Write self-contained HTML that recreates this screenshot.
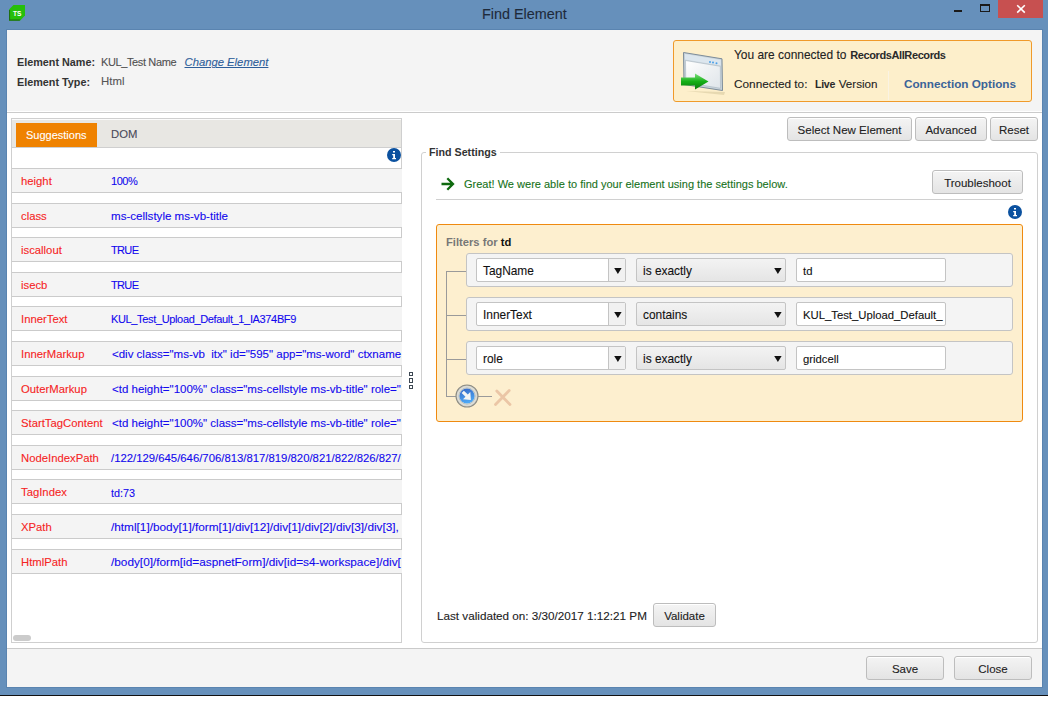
<!DOCTYPE html><html><head><meta charset="utf-8"><style>
html,body{margin:0;padding:0;}
body{width:1049px;height:701px;overflow:hidden;position:relative;background:#fff;font-family:"Liberation Sans",sans-serif;}
.t{position:absolute;white-space:nowrap;line-height:1;-webkit-text-stroke:0.1px currentColor;}
.btn{position:absolute;box-sizing:border-box;border:1px solid #bdbdbd;border-radius:3px;background:linear-gradient(#f4f4f4,#e4e4e4);box-shadow:inset 0 1px 0 #fff;}
</style></head><body>
<div style="position:absolute;left:0px;top:0px;width:1048px;height:695px;box-sizing:border-box;background:#6690bb;"></div>
<div style="position:absolute;left:1047px;top:0px;width:1px;height:695px;box-sizing:border-box;background:#6690bb;"></div>
<div style="position:absolute;left:0px;top:695px;width:1048px;height:1px;box-sizing:border-box;background:#111;"></div>
<svg style="position:absolute;left:9px;top:5px" width="17" height="17" viewBox="0 0 17 17"><path d="M0 4.5 L4.5 0 L16 0 L16 10.5 L11.2 15.6 L0 15.6 Z" fill="#26bf0a"/><path d="M0 5 H1.1 V14.5 H11.5 L10.6 15.8 H0 Z" fill="#1f6f10"/><text x="8.2" y="10.9" font-family="Liberation Sans" font-weight="bold" font-size="6.6" fill="#fff" text-anchor="middle">TS</text></svg>
<div class="t" style="left:482px;top:6.81px;font-size:14.4px;color:#1e2a3a;font-weight:normal;font-style:normal;">Find Element</div>
<div style="position:absolute;left:954px;top:10px;width:8px;height:2px;box-sizing:border-box;background:#1a1a1a;"></div>
<div style="position:absolute;left:980px;top:4px;width:10px;height:8px;box-sizing:border-box;border:1px solid #1a1a1a;border-top-width:2px;"></div>
<div style="position:absolute;left:998px;top:0px;width:45px;height:18px;box-sizing:border-box;background:#c75050;"></div>
<svg style="position:absolute;left:1016px;top:4px" width="10" height="10" viewBox="0 0 10 10"><path d="M1.2 1.2 L8.8 8.6 M8.8 1.2 L1.2 8.6" stroke="#fff" stroke-width="1.6"/></svg>
<div style="position:absolute;left:6px;top:29px;width:1037px;height:659px;box-sizing:border-box;background:#5a84b0;"></div>
<div style="position:absolute;left:7px;top:30px;width:1035px;height:657px;box-sizing:border-box;background:#f4f4f4;"></div>
<div style="position:absolute;left:7px;top:111px;width:1035px;height:1px;box-sizing:border-box;background:#fff;"></div>
<div style="position:absolute;left:7px;top:112px;width:1035px;height:1px;box-sizing:border-box;background:#cbcbcb;"></div>
<div style="position:absolute;left:7px;top:113px;width:1035px;height:535px;box-sizing:border-box;background:#fff;"></div>
<div style="position:absolute;left:7px;top:648px;width:1035px;height:1px;box-sizing:border-box;background:#cacaca;"></div>
<div class="t" style="left:17px;top:56.86px;font-size:10.8px;color:#333;font-weight:bold;font-style:normal;-webkit-text-stroke:0;">Element Name:</div>
<div class="t" style="left:101px;top:56.99px;font-size:11px;color:#505050;font-weight:normal;font-style:normal;letter-spacing:-0.38px;">KUL_Test Name</div>
<div class="t" style="left:184.5px;top:57.45px;font-size:11.28px;color:#2e5e9a;font-weight:normal;font-style:italic;text-decoration:underline;">Change Element</div>
<div class="t" style="left:17px;top:76.86px;font-size:10.8px;color:#333;font-weight:bold;font-style:normal;-webkit-text-stroke:0;">Element Type:</div>
<div class="t" style="left:101px;top:76.35px;font-size:11.4px;color:#555;font-weight:normal;font-style:normal;">Html</div>
<div style="position:absolute;left:673px;top:40px;width:359px;height:62px;box-sizing:border-box;background:#fdefcb;border:1px solid #f09a2a;border-radius:3px;"></div>
<div style="position:absolute;left:888px;top:71px;width:1px;height:29px;box-sizing:border-box;background:#faf3e3;"></div>
<svg style="position:absolute;left:676px;top:46px" width="56" height="50" viewBox="0 0 56 50"><defs><linearGradient id="wg" x1="0" y1="0" x2="1" y2="1"><stop offset="0" stop-color="#ffffff"/><stop offset="0.5" stop-color="#eef1f3"/><stop offset="1" stop-color="#dfe5ea"/></linearGradient><linearGradient id="ag" x1="0" y1="0" x2="0" y2="1"><stop offset="0" stop-color="#7fe07f"/><stop offset="0.5" stop-color="#16b016"/><stop offset="1" stop-color="#0a7a0a"/></linearGradient></defs><path d="M10 45 L48 49 L49 46 Z" fill="#d9c9a0" opacity="0.6"/><path d="M7.5 6.5 L46 12.8 L46.5 44.5 L8 38.5 Z" fill="#c9d4dc" stroke="#7d8c99" stroke-width="1" stroke-linejoin="round"/><path d="M9.5 14.5 L44.3 20.3 L44.5 42.3 L9.8 36.5 Z" fill="url(#wg)" stroke="#a8b6c0" stroke-width="0.6"/><path d="M9 8 L44.8 14 L44.8 19.5 L9 13.5 Z" fill="#dce6ee"/><circle cx="34" cy="16" r="1" fill="#4aa0e8"/><circle cx="37" cy="16.6" r="1" fill="#4aa0e8"/><circle cx="40.5" cy="17.2" r="1" fill="#4aa0e8"/><path d="M5 31.5 H19 V27.5 L32.5 35.5 L19 43.5 V39.5 H5 Z" fill="url(#ag)"/></svg>
<div class="t" style="left:734px;top:49.88px;font-size:11.95px;color:#222;font-weight:normal;font-style:normal;">You are connected to</div>
<div class="t" style="left:850.3px;top:49.69px;font-size:11px;color:#2a2a2a;font-weight:bold;font-style:normal;-webkit-text-stroke:0;letter-spacing:-0.4px;">RecordsAllRecords</div>
<div class="t" style="left:734px;top:78.61px;font-size:11.8px;color:#222;font-weight:normal;font-style:normal;">Connected to:</div>
<div class="t" style="left:815px;top:79.03px;font-size:10.6px;color:#2a2a2a;font-weight:bold;font-style:normal;-webkit-text-stroke:0;letter-spacing:-0.3px;">Live</div>
<div class="t" style="left:838.7px;top:78.16px;font-size:11.63px;color:#222;font-weight:normal;font-style:normal;">Version</div>
<div class="t" style="left:904px;top:78.08px;font-size:11.72px;color:#3a6398;font-weight:bold;font-style:normal;-webkit-text-stroke:0;">Connection Options</div>
<div style="position:absolute;left:11px;top:118px;width:391px;height:525px;box-sizing:border-box;border:1px solid #cfcfcf;background:#fff;"></div>
<div style="position:absolute;left:12px;top:119px;width:389px;height:28px;box-sizing:border-box;background:#e8e7e3;border-top:1px solid #fbfbfb;"></div>
<div style="position:absolute;left:16px;top:123px;width:81px;height:24px;box-sizing:border-box;background:#ef8200;"></div>
<div class="t" style="left:26px;top:129.69px;font-size:11.0px;color:#fff;font-weight:normal;font-style:normal;">Suggestions</div>
<div class="t" style="left:111px;top:129.43px;font-size:11.3px;color:#4a4a5a;font-weight:normal;font-style:normal;">DOM</div>
<div style="position:absolute;left:12px;top:147px;width:389px;height:1px;box-sizing:border-box;background:#cfcfcf;"></div>
<div style="position:absolute;left:12px;top:148px;width:390px;height:494px;overflow:hidden;">
<div style="position:absolute;left:0px;top:20px;width:392px;height:25px;box-sizing:border-box;background:#f4f4f4;border-top:1px solid #cbcbcb;border-bottom:1px solid #cbcbcb;"></div>
<div style="position:absolute;left:0px;top:44px;width:390px;height:12px;box-sizing:border-box;background:#fff;border:1px solid #cbcbcb;border-left:none;"></div>
<div class="t" style="left:9px;top:28.43px;font-size:11.3px;color:#f42424;font-weight:normal;font-style:normal;">height</div>
<div class="t" style="left:99px;top:27.69px;font-size:11px;color:#1208ee;font-weight:normal;font-style:normal;letter-spacing:-0.45px;">100%</div>
<div style="position:absolute;left:0px;top:55px;width:392px;height:25px;box-sizing:border-box;background:#f4f4f4;border-top:1px solid #cbcbcb;border-bottom:1px solid #cbcbcb;"></div>
<div style="position:absolute;left:0px;top:79px;width:390px;height:11px;box-sizing:border-box;background:#fff;border:1px solid #cbcbcb;border-left:none;"></div>
<div class="t" style="left:9px;top:63.43px;font-size:11.3px;color:#f42424;font-weight:normal;font-style:normal;">class</div>
<div class="t" style="left:99px;top:63.21px;font-size:11.57px;color:#1208ee;font-weight:normal;font-style:normal;letter-spacing:0px;">ms-cellstyle ms-vb-title</div>
<div style="position:absolute;left:0px;top:89px;width:392px;height:25px;box-sizing:border-box;background:#f4f4f4;border-top:1px solid #cbcbcb;border-bottom:1px solid #cbcbcb;"></div>
<div style="position:absolute;left:0px;top:113px;width:390px;height:12px;box-sizing:border-box;background:#fff;border:1px solid #cbcbcb;border-left:none;"></div>
<div class="t" style="left:9px;top:97.43px;font-size:11.3px;color:#f42424;font-weight:normal;font-style:normal;">iscallout</div>
<div class="t" style="left:99px;top:96.69px;font-size:11px;color:#1208ee;font-weight:normal;font-style:normal;letter-spacing:-0.65px;">TRUE</div>
<div style="position:absolute;left:0px;top:124px;width:392px;height:25px;box-sizing:border-box;background:#f4f4f4;border-top:1px solid #cbcbcb;border-bottom:1px solid #cbcbcb;"></div>
<div style="position:absolute;left:0px;top:148px;width:390px;height:11px;box-sizing:border-box;background:#fff;border:1px solid #cbcbcb;border-left:none;"></div>
<div class="t" style="left:9px;top:132.43px;font-size:11.3px;color:#f42424;font-weight:normal;font-style:normal;">isecb</div>
<div class="t" style="left:99px;top:131.69px;font-size:11px;color:#1208ee;font-weight:normal;font-style:normal;letter-spacing:-0.65px;">TRUE</div>
<div style="position:absolute;left:0px;top:158px;width:392px;height:25px;box-sizing:border-box;background:#f4f4f4;border-top:1px solid #cbcbcb;border-bottom:1px solid #cbcbcb;"></div>
<div style="position:absolute;left:0px;top:182px;width:390px;height:12px;box-sizing:border-box;background:#fff;border:1px solid #cbcbcb;border-left:none;"></div>
<div class="t" style="left:9px;top:166.43px;font-size:11.3px;color:#f42424;font-weight:normal;font-style:normal;">InnerText</div>
<div class="t" style="left:99px;top:165.69px;font-size:11px;color:#1208ee;font-weight:normal;font-style:normal;letter-spacing:-0.35px;">KUL_Test_Upload_Default_1_IA374BF9</div>
<div style="position:absolute;left:0px;top:193px;width:392px;height:25px;box-sizing:border-box;background:#f4f4f4;border-top:1px solid #cbcbcb;border-bottom:1px solid #cbcbcb;"></div>
<div style="position:absolute;left:0px;top:217px;width:390px;height:12px;box-sizing:border-box;background:#fff;border:1px solid #cbcbcb;border-left:none;"></div>
<div class="t" style="left:9px;top:201.43px;font-size:11.3px;color:#f42424;font-weight:normal;font-style:normal;">InnerMarkup</div>
<div class="t" style="left:100px;top:201.27px;font-size:11.5px;color:#1208ee;font-weight:normal;font-style:normal;letter-spacing:0px;">&lt;div class="ms-vb&nbsp; itx" id="595" app="ms-word" ctxname</div>
<div style="position:absolute;left:0px;top:228px;width:392px;height:25px;box-sizing:border-box;background:#f4f4f4;border-top:1px solid #cbcbcb;border-bottom:1px solid #cbcbcb;"></div>
<div style="position:absolute;left:0px;top:252px;width:390px;height:11px;box-sizing:border-box;background:#fff;border:1px solid #cbcbcb;border-left:none;"></div>
<div class="t" style="left:9px;top:236.43px;font-size:11.3px;color:#f42424;font-weight:normal;font-style:normal;">OuterMarkup</div>
<div class="t" style="left:100px;top:236.27px;font-size:11.5px;color:#1208ee;font-weight:normal;font-style:normal;letter-spacing:0px;">&lt;td height="100%" class="ms-cellstyle ms-vb-title" role="</div>
<div style="position:absolute;left:0px;top:262px;width:392px;height:25px;box-sizing:border-box;background:#f4f4f4;border-top:1px solid #cbcbcb;border-bottom:1px solid #cbcbcb;"></div>
<div style="position:absolute;left:0px;top:286px;width:390px;height:12px;box-sizing:border-box;background:#fff;border:1px solid #cbcbcb;border-left:none;"></div>
<div class="t" style="left:9px;top:270.43px;font-size:11.3px;color:#f42424;font-weight:normal;font-style:normal;">StartTagContent</div>
<div class="t" style="left:100px;top:270.27px;font-size:11.5px;color:#1208ee;font-weight:normal;font-style:normal;letter-spacing:0px;">&lt;td height="100%" class="ms-cellstyle ms-vb-title" role="</div>
<div style="position:absolute;left:0px;top:297px;width:392px;height:25px;box-sizing:border-box;background:#f4f4f4;border-top:1px solid #cbcbcb;border-bottom:1px solid #cbcbcb;"></div>
<div style="position:absolute;left:0px;top:321px;width:390px;height:11px;box-sizing:border-box;background:#fff;border:1px solid #cbcbcb;border-left:none;"></div>
<div class="t" style="left:9px;top:305.43px;font-size:11.3px;color:#f42424;font-weight:normal;font-style:normal;">NodeIndexPath</div>
<div class="t" style="left:99px;top:305.40px;font-size:11.34px;color:#1208ee;font-weight:normal;font-style:normal;letter-spacing:0px;">/122/129/645/646/706/813/817/819/820/821/822/826/827/</div>
<div style="position:absolute;left:0px;top:331px;width:392px;height:25px;box-sizing:border-box;background:#f4f4f4;border-top:1px solid #cbcbcb;border-bottom:1px solid #cbcbcb;"></div>
<div style="position:absolute;left:0px;top:355px;width:390px;height:12px;box-sizing:border-box;background:#fff;border:1px solid #cbcbcb;border-left:none;"></div>
<div class="t" style="left:9px;top:339.43px;font-size:11.3px;color:#f42424;font-weight:normal;font-style:normal;">TagIndex</div>
<div class="t" style="left:99px;top:339.86px;font-size:10.8px;color:#1208ee;font-weight:normal;font-style:normal;letter-spacing:0px;">td:73</div>
<div style="position:absolute;left:0px;top:366px;width:392px;height:25px;box-sizing:border-box;background:#f4f4f4;border-top:1px solid #cbcbcb;border-bottom:1px solid #cbcbcb;"></div>
<div style="position:absolute;left:0px;top:390px;width:390px;height:12px;box-sizing:border-box;background:#fff;border:1px solid #cbcbcb;border-left:none;"></div>
<div class="t" style="left:9px;top:374.43px;font-size:11.3px;color:#f42424;font-weight:normal;font-style:normal;">XPath</div>
<div class="t" style="left:99px;top:374.01px;font-size:11.8px;color:#1208ee;font-weight:normal;font-style:normal;letter-spacing:0px;">/html[1]/body[1]/form[1]/div[12]/div[1]/div[2]/div[3]/div[3],</div>
<div style="position:absolute;left:0px;top:401px;width:392px;height:25px;box-sizing:border-box;background:#f4f4f4;border-top:1px solid #cbcbcb;border-bottom:1px solid #cbcbcb;"></div>
<div class="t" style="left:9px;top:409.43px;font-size:11.3px;color:#f42424;font-weight:normal;font-style:normal;">HtmlPath</div>
<div class="t" style="left:99px;top:409.01px;font-size:11.8px;color:#1208ee;font-weight:normal;font-style:normal;letter-spacing:0px;">/body[0]/form[id=aspnetForm]/div[id=s4-workspace]/div[</div>
</div>
<svg style="position:absolute;left:387px;top:148px" width="14" height="14" viewBox="0 0 14 14"><circle cx="7" cy="7" r="7" fill="#0b519f"/><path d="M6 3h2v1.6h-2z M5.2 6h2.8v4h1v1.2h-3.8v-1.2h1v-2.8h-1z" fill="#fff"/></svg>
<div style="position:absolute;left:12.5px;top:635px;width:18.5px;height:6px;box-sizing:border-box;background:#cbcbcb;border-radius:3px;"></div>
<svg style="position:absolute;left:409px;top:372px" width="4" height="17" viewBox="0 0 4 17"><rect x="0.5" y="0.5" width="3" height="3" fill="none" stroke="#3d4853" stroke-width="1"/><rect x="0.5" y="6.5" width="3" height="4" fill="none" stroke="#3d4853" stroke-width="1"/><rect x="0.5" y="13.5" width="3" height="3" fill="none" stroke="#3d4853" stroke-width="1"/></svg>
<div class="btn" style="left:787px;top:117px;width:125px;height:24px;"></div>
<div class="t" style="left:787px;width:125px;text-align:center;top:124.82px;font-size:11.55px;color:#222;">Select New Element</div>
<div class="btn" style="left:915px;top:117px;width:72px;height:24px;"></div>
<div class="t" style="left:915px;width:72px;text-align:center;top:124.87px;font-size:11.5px;color:#222;">Advanced</div>
<div class="btn" style="left:990px;top:117px;width:48px;height:24px;"></div>
<div class="t" style="left:990px;width:48px;text-align:center;top:124.87px;font-size:11.5px;color:#222;">Reset</div>
<div style="position:absolute;left:421px;top:152px;width:617px;height:491px;box-sizing:border-box;border:1px solid #d0d0d0;border-radius:3px;"></div>
<div style="position:absolute;left:426px;top:145px;width:74px;height:14px;box-sizing:border-box;background:#fff;"></div>
<div class="t" style="left:429px;top:146.94px;font-size:10.7px;color:#333;font-weight:bold;font-style:normal;-webkit-text-stroke:0;">Find Settings</div>
<svg style="position:absolute;left:441px;top:177px" width="14" height="14" viewBox="0 0 14 14"><path d="M0.5 7 H12 M6.3 1.2 L12 7 L6.3 12.8" fill="none" stroke="#0f6a0f" stroke-width="2.3"/></svg>
<div class="t" style="left:464px;top:178.66px;font-size:11.03px;color:#17721a;font-weight:normal;font-style:normal;">Great! We were able to find your element using the settings below.</div>
<div class="btn" style="left:932px;top:170px;width:91px;height:24px;"></div>
<div class="t" style="left:932px;width:91px;text-align:center;top:177.87px;font-size:11.5px;color:#222;">Troubleshoot</div>
<div style="position:absolute;left:436px;top:199px;width:587px;height:1px;box-sizing:border-box;background:#d0d0d0;"></div>
<svg style="position:absolute;left:1008px;top:205px" width="14" height="14" viewBox="0 0 14 14"><circle cx="7" cy="7" r="7" fill="#0b519f"/><path d="M6 3h2v1.6h-2z M5.2 6h2.8v4h1v1.2h-3.8v-1.2h1v-2.8h-1z" fill="#fff"/></svg>
<div style="position:absolute;left:436px;top:224px;width:587px;height:198px;box-sizing:border-box;background:#fdefcf;border:1px solid #ef8a10;border-radius:3px;"></div>
<div class="t" style="left:446px;top:236.52px;font-size:11.2px;color:#777;font-weight:bold;font-style:normal;-webkit-text-stroke:0;">Filters for <span style="color:#111">td</span></div>
<div style="position:absolute;left:446px;top:271px;width:1px;height:126px;box-sizing:border-box;background:#9a9a9a;"></div>
<div style="position:absolute;left:446px;top:271px;width:20px;height:1px;box-sizing:border-box;background:#9a9a9a;"></div>
<div style="position:absolute;left:446px;top:315px;width:20px;height:1px;box-sizing:border-box;background:#9a9a9a;"></div>
<div style="position:absolute;left:446px;top:359px;width:20px;height:1px;box-sizing:border-box;background:#9a9a9a;"></div>
<div style="position:absolute;left:446px;top:396px;width:10px;height:1px;box-sizing:border-box;background:#9a9a9a;"></div>
<div style="position:absolute;left:478px;top:396px;width:14px;height:1px;box-sizing:border-box;background:#9a9a9a;"></div>
<div style="position:absolute;left:466px;top:253px;width:547px;height:34px;box-sizing:border-box;background:#f4f4f4;border:1px solid #c4c4c4;border-radius:3px;"></div>
<div style="position:absolute;left:476px;top:258px;width:150px;height:24px;box-sizing:border-box;background:#fff;border:1px solid #c4c4c4;border-radius:2px;"></div>
<div style="position:absolute;left:608px;top:259px;width:17px;height:22px;box-sizing:border-box;background:#f1f1f1;border-left:1px solid #c4c4c4;"></div>
<svg style="position:absolute;left:614px;top:267.5px" width="8" height="6" viewBox="0 0 8 6"><path d="M0.2 0 H7.6 L3.9 6 Z" fill="#111"/></svg>
<div class="t" style="left:483px;top:265.93px;font-size:11.9px;color:#111;font-weight:normal;font-style:normal;">TagName</div>
<div style="position:absolute;left:636px;top:258px;width:150px;height:24px;box-sizing:border-box;background:linear-gradient(#f3f3f3,#e5e5e5);border:1px solid #c4c4c4;border-radius:2px;"></div>
<svg style="position:absolute;left:774px;top:267.5px" width="8" height="6" viewBox="0 0 8 6"><path d="M0.2 0 H7.6 L3.9 6 Z" fill="#111"/></svg>
<div class="t" style="left:643px;top:265.93px;font-size:11.9px;color:#111;font-weight:normal;font-style:normal;">is exactly</div>
<div style="position:absolute;left:796px;top:258px;width:150px;height:24px;box-sizing:border-box;background:#fff;border:1px solid #c4c4c4;border-radius:2px;"></div>
<div style="position:absolute;left:797px;top:259px;width:147px;height:22px;overflow:hidden;"><div class="t" style="left:6px;top:7.43px;font-size:11.3px;color:#111;">td</div></div>
<div style="position:absolute;left:466px;top:297px;width:547px;height:34px;box-sizing:border-box;background:#f4f4f4;border:1px solid #c4c4c4;border-radius:3px;"></div>
<div style="position:absolute;left:476px;top:302px;width:150px;height:24px;box-sizing:border-box;background:#fff;border:1px solid #c4c4c4;border-radius:2px;"></div>
<div style="position:absolute;left:608px;top:303px;width:17px;height:22px;box-sizing:border-box;background:#f1f1f1;border-left:1px solid #c4c4c4;"></div>
<svg style="position:absolute;left:614px;top:311.5px" width="8" height="6" viewBox="0 0 8 6"><path d="M0.2 0 H7.6 L3.9 6 Z" fill="#111"/></svg>
<div class="t" style="left:483px;top:309.93px;font-size:11.9px;color:#111;font-weight:normal;font-style:normal;">InnerText</div>
<div style="position:absolute;left:636px;top:302px;width:150px;height:24px;box-sizing:border-box;background:linear-gradient(#f3f3f3,#e5e5e5);border:1px solid #c4c4c4;border-radius:2px;"></div>
<svg style="position:absolute;left:774px;top:311.5px" width="8" height="6" viewBox="0 0 8 6"><path d="M0.2 0 H7.6 L3.9 6 Z" fill="#111"/></svg>
<div class="t" style="left:643px;top:309.93px;font-size:11.9px;color:#111;font-weight:normal;font-style:normal;">contains</div>
<div style="position:absolute;left:796px;top:302px;width:150px;height:24px;box-sizing:border-box;background:#fff;border:1px solid #c4c4c4;border-radius:2px;"></div>
<div style="position:absolute;left:797px;top:303px;width:147px;height:22px;overflow:hidden;"><div class="t" style="left:6px;top:7.43px;font-size:11.3px;color:#111;">KUL_Test_Upload_Default_</div></div>
<div style="position:absolute;left:466px;top:341px;width:547px;height:34px;box-sizing:border-box;background:#f4f4f4;border:1px solid #c4c4c4;border-radius:3px;"></div>
<div style="position:absolute;left:476px;top:346px;width:150px;height:24px;box-sizing:border-box;background:#fff;border:1px solid #c4c4c4;border-radius:2px;"></div>
<div style="position:absolute;left:608px;top:347px;width:17px;height:22px;box-sizing:border-box;background:#f1f1f1;border-left:1px solid #c4c4c4;"></div>
<svg style="position:absolute;left:614px;top:355.5px" width="8" height="6" viewBox="0 0 8 6"><path d="M0.2 0 H7.6 L3.9 6 Z" fill="#111"/></svg>
<div class="t" style="left:483px;top:353.93px;font-size:11.9px;color:#111;font-weight:normal;font-style:normal;">role</div>
<div style="position:absolute;left:636px;top:346px;width:150px;height:24px;box-sizing:border-box;background:linear-gradient(#f3f3f3,#e5e5e5);border:1px solid #c4c4c4;border-radius:2px;"></div>
<svg style="position:absolute;left:774px;top:355.5px" width="8" height="6" viewBox="0 0 8 6"><path d="M0.2 0 H7.6 L3.9 6 Z" fill="#111"/></svg>
<div class="t" style="left:643px;top:353.93px;font-size:11.9px;color:#111;font-weight:normal;font-style:normal;">is exactly</div>
<div style="position:absolute;left:796px;top:346px;width:150px;height:24px;box-sizing:border-box;background:#fff;border:1px solid #c4c4c4;border-radius:2px;"></div>
<div style="position:absolute;left:797px;top:347px;width:147px;height:22px;overflow:hidden;"><div class="t" style="left:6px;top:7.43px;font-size:11.3px;color:#111;">gridcell</div></div>
<svg style="position:absolute;left:455px;top:384px" width="24" height="24" viewBox="0 0 24 24"><defs><radialGradient id="rg" cx="50%" cy="50%" r="50%"><stop offset="0.6" stop-color="#ffffff"/><stop offset="1" stop-color="#c8c8c0"/></radialGradient><linearGradient id="bg1" x1="0" y1="0" x2="0.3" y2="1"><stop offset="0" stop-color="#3464c4"/><stop offset="1" stop-color="#4ea8f4"/></linearGradient></defs><circle cx="12" cy="12" r="11" fill="url(#rg)" stroke="#8c8c84" stroke-width="1.1"/><circle cx="12" cy="12" r="8.2" fill="none" stroke="#a9b0a8" stroke-width="0.8"/><circle cx="12" cy="12" r="7.6" fill="url(#bg1)"/><path d="M6 10.4 H11.5 V6.8 L17.5 12 L11.5 17.2 V13.6 H6 Z" fill="#f4f4f4" transform="rotate(45 12 12)"/></svg>
<svg style="position:absolute;left:492px;top:387px" width="20" height="20" viewBox="0 0 20 20"><path d="M3.5 17.5 L17.2 3.5 M4.8 4 L18 17.5" stroke="#ebc6a6" stroke-width="2.8" stroke-linecap="round"/></svg>
<div class="t" style="left:437px;top:610.10px;font-size:11.7px;color:#222;font-weight:normal;font-style:normal;">Last validated on: 3/30/2017 1:12:21 PM</div>
<div class="btn" style="left:653px;top:603px;width:63px;height:24px;"></div>
<div class="t" style="left:653px;width:63px;text-align:center;top:610.87px;font-size:11.5px;color:#222;">Validate</div>
<div class="btn" style="left:866px;top:656px;width:78px;height:24px;"></div>
<div class="t" style="left:866px;width:78px;text-align:center;top:663.87px;font-size:11.5px;color:#222;">Save</div>
<div class="btn" style="left:954px;top:656px;width:78px;height:24px;"></div>
<div class="t" style="left:954px;width:78px;text-align:center;top:663.87px;font-size:11.5px;color:#222;">Close</div>
</body></html>
